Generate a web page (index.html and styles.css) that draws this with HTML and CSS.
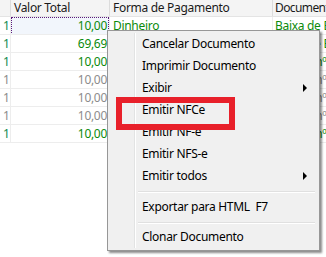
FILE: index.html
```html
<!DOCTYPE html>
<html>
<head>
<meta charset="utf-8">
<link rel="stylesheet" href="styles.css">
</head>
<body>
<div class="grid">
  <div class="row head">
    <div class="c c0"></div>
    <div class="c c1">Valor Total</div>
    <div class="c c2">Forma de Pagamento</div>
    <div class="c c3">Documento</div>
  </div>
  <div class="row g">
    <div class="c c0">1</div>
    <div class="c c1 num"><span class="focus">10,00</span></div>
    <div class="c c2">Dinheiro</div>
    <div class="c c3">Baixa de Entrada</div>
  </div>
  <div class="row g">
    <div class="c c0">1</div>
    <div class="c c1 num">69,69</div>
    <div class="c c2"></div>
    <div class="c c3">Baixa de Entrada</div>
  </div>
  <div class="row g">
    <div class="c c0">1</div>
    <div class="c c1 num">10,00</div>
    <div class="c c2"></div>
    <div class="c c3">Pedido nº 000123</div>
  </div>
  <div class="row d">
    <div class="c c0">1</div>
    <div class="c c1 num">10,00</div>
    <div class="c c2"></div>
    <div class="c c3">Pedido nº 000122</div>
  </div>
  <div class="row d">
    <div class="c c0">1</div>
    <div class="c c1 num">10,00</div>
    <div class="c c2"></div>
    <div class="c c3">Pedido nº 000121</div>
  </div>
  <div class="row d">
    <div class="c c0">1</div>
    <div class="c c1 num">10,00</div>
    <div class="c c2"></div>
    <div class="c c3">Pedido nº 000120</div>
  </div>
  <div class="row g">
    <div class="c c0">1</div>
    <div class="c c1 num">10,00</div>
    <div class="c c2"></div>
    <div class="c c3">Pedido nº 000119</div>
  </div>
</div>

<div class="menu">
  <div class="item">Cancelar Documento</div>
  <div class="item">Imprimir Documento</div>
  <div class="item sub">Exibir<span class="arrow"></span></div>
  <div class="item">Emitir NFCe</div>
  <div class="item">Emitir NF-e</div>
  <div class="item">Emitir NFS-e</div>
  <div class="item sub">Emitir todos<span class="arrow"></span></div>
  <div class="sep"></div>
  <div class="item">Exportar para HTML&nbsp;&nbsp;F7</div>
  <div class="sep"></div>
  <div class="item">Clonar Documento</div>
</div>

<div class="highlight"></div>
</body>
</html>
```

FILE: styles.css
```css
html, body {
  margin: 0;
  padding: 0;
  background: #ffffff;
}
body {
  width: 326px;
  height: 257px;
  overflow: hidden;
  position: relative;
  font-family: "Noto Sans", "DejaVu Sans", sans-serif;
  font-size: 12px;
  letter-spacing: -0.3px;
  color: #000;
}
.grid {
  display: flex;
  flex-direction: column;
  width: 326px;
}
.row {
  display: grid;
  grid-template-columns: 11px 99px 163px minmax(0, 1fr);
  height: 18px;
  box-sizing: border-box;
  border-bottom: 1px solid #ededed;
}
.row.head {
  height: 17px;
  background: #f4f4f4;
  border-bottom: 1px solid #e4e4e4;
}
.c {
  box-sizing: border-box;
  border-right: 1px solid #ededed;
  padding: 0 3px;
  line-height: 17px;
  white-space: nowrap;
  overflow: hidden;
}
.head .c {
  border-right-color: #dcdcdc;
  line-height: 16px;
  color: #1a1a1a;
}
.c0 {
  padding: 0 0 0 3px;
}
.c3 {
  padding-left: 2px;
  border-right: none;
}
.head .c3 {
  letter-spacing: -0.6px;
}
.num {
  text-align: right;
  padding-right: 2px;
}
.g .c { color: #0b8a0b; }
.d .c { color: #8c8c8c; }
.g .c0 { color: #108a50; }
.d .c0 { color: #8c8c8c; }

.focus {
  display: block;
  margin: 0 -2px 0 -2px;
  padding-right: 2px;
  outline: 1px dotted #5a1a7a;
  outline-offset: -1px;
  height: 18px;
  line-height: 17px;
}
.row:nth-child(2) .c1 {
  padding: 0 2px 0 2px;
  background: #f2f6fc;
}

.menu {
  position: absolute;
  left: 107px;
  top: 30px;
  width: 213px;
  height: 221px;
  box-sizing: border-box;
  background: #f0f0f0;
  border: 1px solid #979797;
  box-shadow: 2px 2px 2px rgba(0, 0, 0, 0.45);
  padding: 2px;
  display: flex;
  flex-direction: column;
}
.menu::before {
  content: "";
  position: absolute;
  left: 26px;
  top: 2px;
  bottom: 2px;
  width: 1px;
  background: #e2e3e3;
  border-right: 1px solid #ffffff;
}
.item {
  height: 22px;
  line-height: 22px;
  padding-left: 32px;
  position: relative;
  color: #000;
}
.arrow {
  position: absolute;
  right: 10px;
  top: 7px;
  width: 0;
  height: 0;
  border-top: 4px solid transparent;
  border-bottom: 4px solid transparent;
  border-left: 4px solid #000;
}
.sep {
  height: 9px;
  position: relative;
}
.sep::after {
  content: "";
  position: absolute;
  left: 28px;
  right: 2px;
  top: 4px;
  height: 1px;
  background: #e0e0e0;
  border-bottom: 1px solid #ffffff;
}
.highlight {
  position: absolute;
  left: 116px;
  top: 97px;
  width: 119px;
  height: 33px;
  box-sizing: border-box;
  border: 6px solid #e8202a;
}
```
